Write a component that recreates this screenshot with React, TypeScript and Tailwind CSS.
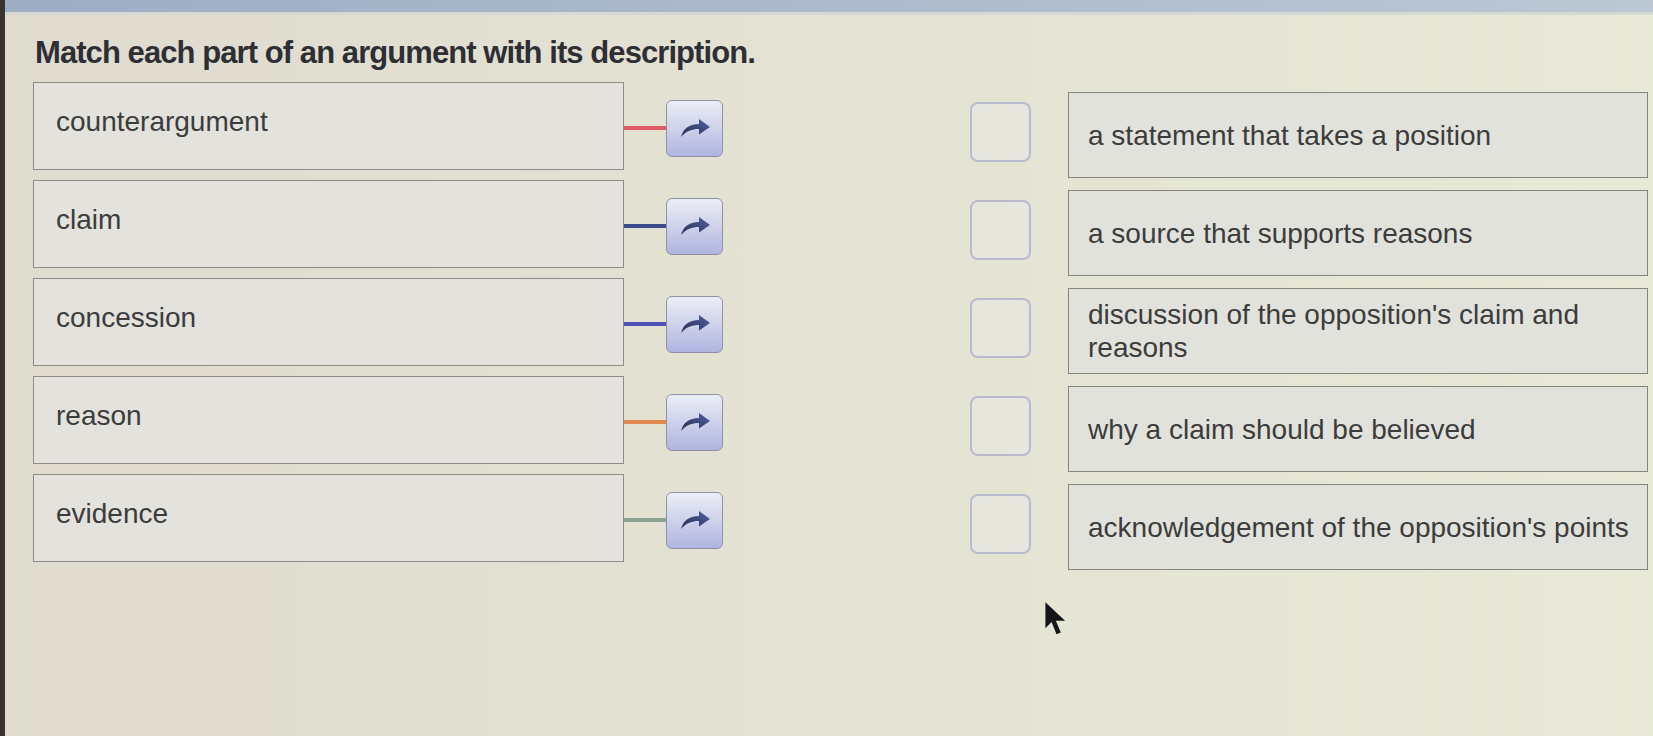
import React from 'react';

const parts = [
  { label: 'counterargument', line: 'bg-[#df5a64]' },
  { label: 'claim', line: 'bg-[#3c4a8a]' },
  { label: 'concession', line: 'bg-[#4f4fb4]' },
  { label: 'reason', line: 'bg-[#e08a52]' },
  { label: 'evidence', line: 'bg-[#8da293]' },
];

const descriptions = [
  'a statement that takes a position',
  'a source that supports reasons',
  "discussion of the opposition's claim and reasons",
  'why a claim should be believed',
  "acknowledgement of the opposition's points",
];

function ForwardArrow() {
  return (
    <svg width="32" height="20" viewBox="0 0 32 20">
      <defs>
        <linearGradient id="arrowFill" x1="0" y1="1" x2="1" y2="0">
          <stop offset="0" stopColor="#262f4f" />
          <stop offset="1" stopColor="#5260a4" />
        </linearGradient>
      </defs>
      <path d="M2 19 C4 11 10 6 20 6 L20 1 L31 9 L20 16.5 L20 11 C13 11 7 13 2 19 Z" fill="url(#arrowFill)" />
    </svg>
  );
}

function Pointer() {
  return (
    <svg width="27" height="37" viewBox="0 0 20 30">
      <path d="M1 1 L1 22 L6 17 L10 27 L13.5 25.5 L9.5 16 L17 16 Z" fill="#15161c" />
    </svg>
  );
}

export default function App() {
  return (
    <div className="relative flex h-[736px] w-full overflow-hidden bg-gradient-to-r from-[#dfdbcf] via-[#e4e3d3] to-[#e8e9d7] font-[family-name:'Liberation_Sans',Arial,sans-serif]">
      {/* screen edge */}
      <div className="w-[5px] shrink-0 bg-[#3a3430]" />

      <div className="flex-1">
        <div className="h-[12px] bg-gradient-to-r from-[#9dadc3] to-[#bcc7d4]" />
        <div className="h-[3px] bg-[#d6d8d3]" />

        <div className="pl-[28px]">
          <h1 className="mt-[22px] mb-[14px] ml-[2px] text-[31px] leading-none font-bold tracking-[-0.03em] text-[#2e2f35]">
            Match each part of an argument with its description.
          </h1>

          <div className="flex items-start">
            {/* terms */}
            <div className="flex flex-col gap-[10px]">
              {parts.map((p) => (
                <div key={p.label} className="flex items-center">
                  <div className="h-[88px] w-[591px] border border-[#8d8c88] bg-[#e3e2dc] pl-[22px] pt-[23px] text-[28px] leading-[32px] text-[#3c3c3c]">
                    {p.label}
                  </div>
                  <div className="mt-[4px] flex items-center">
                    <div className={`h-[4px] w-[42px] ${p.line}`} />
                    <button className="flex h-[57px] w-[57px] items-center justify-center rounded-[6px] border border-[#8f91a8] bg-gradient-to-b from-[#eceef5] to-[#b0b5e0]">
                      <ForwardArrow />
                    </button>
                  </div>
                </div>
              ))}
            </div>

            {/* descriptions */}
            <div className="ml-[247px] mt-[10px] flex flex-col gap-[12px]">
              {descriptions.map((d) => (
                <div key={d} className="flex items-center gap-[37px]">
                  <div className="h-[60px] w-[61px] -translate-y-[3px] rounded-[8px] border-2 border-[#b9b9d0] bg-[#e8e8e2]/60" />
                  <div className="flex h-[86px] w-[580px] items-center border border-[#85847f] bg-[#e2e2dc] pl-[19px] pr-[6px] text-[28px] leading-[33px] text-[#3c3c3c]">
                    {d}
                  </div>
                </div>
              ))}
            </div>
          </div>
        </div>
      </div>

      <div className="absolute left-[1043px] top-[601px]">
        <Pointer />
      </div>
    </div>
  );
}
